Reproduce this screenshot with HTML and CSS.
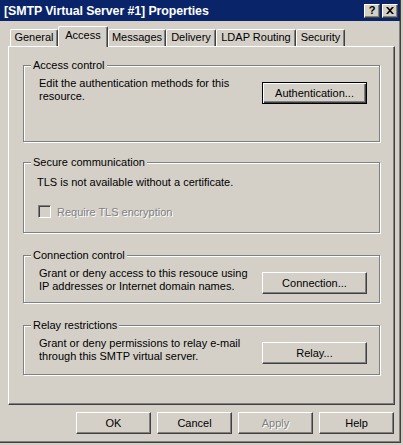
FILE: index.html
```html
<!DOCTYPE html>
<html lang="en">
<head>
    <meta charset="UTF-8">
    <title>[SMTP Virtual Server #1] Properties</title>
    <link rel="stylesheet" href="styles.css">
</head>
<body>
    <div class="window">
        <div class="titlebar">
            <span class="title">[SMTP Virtual Server #1] Properties</span>
            <div class="caption-buttons">
                <span class="cap-btn">?</span>
                <span class="cap-btn">
                    <svg width="8" height="7" viewBox="0 0 8 7">
                        <path d="M0 0h2l2 2.2L6 0h2L5 3.5 8 7H6L4 4.8 2 7H0l3-3.5z" fill="#000"/>
                    </svg>
                </span>
            </div>
        </div>

        <div class="client">
            <div class="tabs">
                <div class="tab tab-general">General</div>
                <div class="tab tab-access active">Access</div>
                <div class="tab tab-messages">Messages</div>
                <div class="tab tab-delivery">Delivery</div>
                <div class="tab tab-ldap">LDAP Routing</div>
                <div class="tab tab-security">Security</div>
            </div>

            <div class="page">
                <div class="group group-access">
                    <span class="group-title">Access control</span>
                    <div class="group-row">
                        <p class="group-text">Edit the authentication methods for this<br>resource.</p>
                        <button class="btn btn-side btn-default">Authentication...</button>
                    </div>
                </div>

                <div class="group group-secure">
                    <span class="group-title">Secure communication</span>
                    <p class="group-text tls-text">TLS is not available without a certificate.</p>
                    <label class="checkbox disabled">
                        <span class="check-box"></span>
                        <span class="check-label">Require TLS encryption</span>
                    </label>
                </div>

                <div class="group group-connection">
                    <span class="group-title">Connection control</span>
                    <div class="group-row">
                        <p class="group-text">Grant or deny access to this resouce using<br>IP addresses or Internet domain names.</p>
                        <button class="btn btn-side">Connection...</button>
                    </div>
                </div>

                <div class="group group-relay">
                    <span class="group-title">Relay restrictions</span>
                    <div class="group-row">
                        <p class="group-text">Grant or deny permissions to relay e-mail<br>through this SMTP virtual server.</p>
                        <button class="btn btn-side">Relay...</button>
                    </div>
                </div>
            </div>

            <div class="footer">
                <button class="btn btn-footer">OK</button>
                <button class="btn btn-footer">Cancel</button>
                <button class="btn btn-footer disabled">Apply</button>
                <button class="btn btn-footer">Help</button>
            </div>
        </div>
    </div>
</body>
</html>
```

FILE: styles.css
```css
* {
    margin: 0;
    padding: 0;
    box-sizing: border-box;
}

body {
    background-color: #d4d0c8;
    font-family: 'Liberation Sans', Arial, sans-serif;
    font-size: 11px;
    color: #000;
    width: 403px;
    height: 445px;
    overflow: hidden;
}

.window {
    width: 401px;
    height: 443px;
    background-color: #d4d0c8;
    border-right: 1px solid #404040;
    border-bottom: 1px solid #404040;
    box-shadow: inset -1px -1px 0 #808080;
    display: flex;
    flex-direction: column;
}

/* title bar */
.titlebar {
    height: 21px;
    width: 400px;
    background-color: #0a246a;
    display: flex;
    align-items: center;
    justify-content: space-between;
    padding: 0 2px 0 4px;
}

.title {
    color: #fff;
    font-weight: bold;
    font-size: 12.4px;
    letter-spacing: -0.1px;
}

.caption-buttons {
    display: flex;
    gap: 2px;
}

.cap-btn {
    width: 16px;
    height: 14px;
    background-color: #d4d0c8;
    border-top: 1px solid #fff;
    border-left: 1px solid #fff;
    border-right: 1px solid #404040;
    border-bottom: 1px solid #404040;
    box-shadow: inset -1px -1px 0 #808080;
    display: flex;
    align-items: center;
    justify-content: center;
    font-weight: bold;
    font-size: 11px;
    line-height: 1;
}

/* tabs */
.client {
    flex: 1;
    display: flex;
    flex-direction: column;
}

.tabs {
    height: 25px;
    display: flex;
    align-items: flex-end;
    padding-left: 10px;
}

.tab {
    height: 17px;
    border-top: 1px solid #fff;
    border-left: 1px solid #fff;
    border-right: 1px solid #404040;
    border-radius: 2px 2px 0 0;
    box-shadow: inset -1px 0 0 #808080;
    text-align: center;
    line-height: 15px;
    background-color: #d4d0c8;
}

.tab-general { width: 48px; }
.tab-access { width: 50px; }
.tab-messages { width: 58px; }
.tab-delivery { width: 50px; }
.tab-ldap { width: 80px; }
.tab-security { width: 49px; }

.tab.active {
    height: 21px;
    margin-bottom: -1px;
    position: relative;
    z-index: 1;
    line-height: 16px;
}

/* property page */
.page {
    margin-left: 8px;
    width: 387px;
    height: 359px;
    border-top: 1px solid #fff;
    border-left: 1px solid #fff;
    border-right: 1px solid #404040;
    border-bottom: 1px solid #404040;
    box-shadow: inset -1px -1px 0 #808080;
    padding: 18px 0 0 14px;
}

.group {
    position: relative;
    width: 357px;
    border: 1px solid #808080;
    box-shadow: inset 1px 1px 0 #fff, 1px 1px 0 #fff;
}

.group-title {
    position: absolute;
    top: -7px;
    left: 7px;
    padding: 0 2px;
    background-color: #d4d0c8;
    line-height: 13px;
}

.group-access { height: 77px; }
.group-secure { height: 71px; margin-top: 20px; }
.group-connection { height: 48px; margin-top: 22px; }
.group-relay { height: 50px; margin-top: 22px; }

.group-row {
    display: flex;
    justify-content: space-between;
    align-items: flex-start;
    padding: 11px 12px 0 15px;
}

.group-access .group-row {
    padding-top: 11px;
}

.group-text {
    line-height: 13px;
}

.tls-text {
    padding: 13px 0 0 13px;
}

.checkbox {
    display: flex;
    align-items: center;
    gap: 6px;
    margin: 16px 0 0 14px;
}

.check-box {
    width: 13px;
    height: 13px;
    background-color: #d4d0c8;
    border-top: 1px solid #808080;
    border-left: 1px solid #808080;
    border-right: 1px solid #fff;
    border-bottom: 1px solid #fff;
    box-shadow: inset 1px 1px 0 #404040;
}

.disabled,
.disabled .check-label {
    color: #808080;
    text-shadow: 1px 1px 0 #fff;
}

/* buttons */
.btn {
    font-family: 'Liberation Sans', Arial, sans-serif;
    font-size: 11px;
    color: #000;
    height: 22px;
    background-color: #d4d0c8;
    border-top: 1px solid #fff;
    border-left: 1px solid #fff;
    border-right: 1px solid #404040;
    border-bottom: 1px solid #404040;
    box-shadow: inset -1px -1px 0 #808080;
}

.btn.disabled {
    color: #808080;
}

.btn-side {
    width: 105px;
    margin-top: 5px;
}

.btn-default {
    border: 1px solid #000;
    box-shadow: inset 1px 1px 0 #fff, inset -1px -1px 0 #404040, inset -2px -2px 0 #808080;
}

.footer {
    display: flex;
    justify-content: flex-end;
    gap: 6px;
    padding: 7px 6px 0 0;
}

.btn-footer {
    width: 75px;
}
```
